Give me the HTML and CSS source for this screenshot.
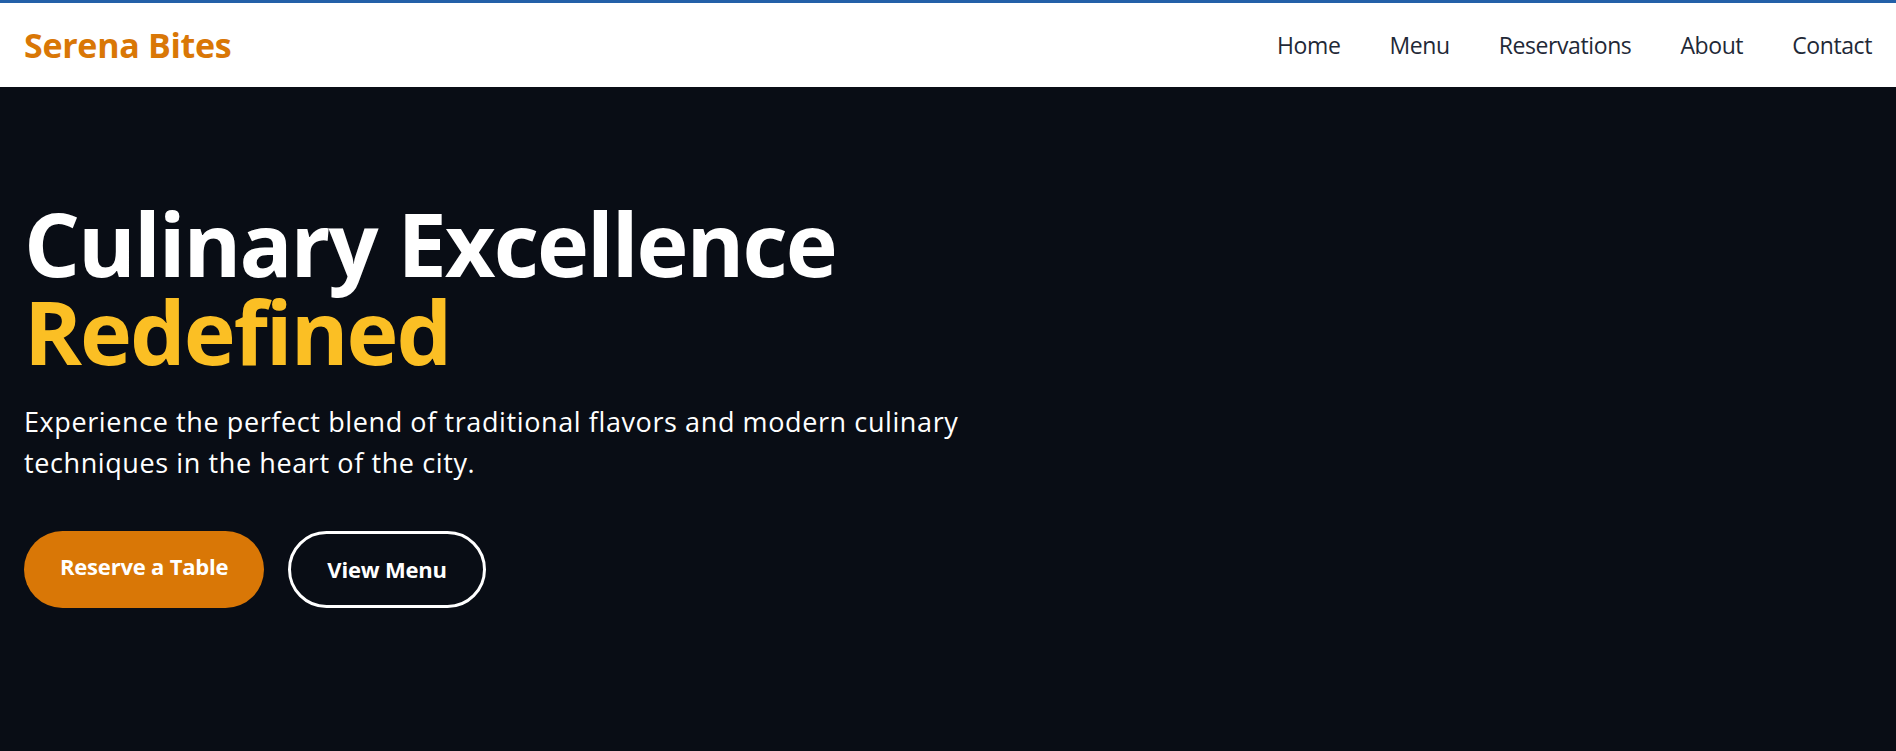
FILE: index.html
```html
<!DOCTYPE html>
<html lang="en">
<head>
<meta charset="utf-8">
<title>Serena Bites</title>
<link rel="stylesheet" href="styles.css">
</head>
<body>
<header class="site-header">
  <a class="logo" href="#">Serena Bites</a>
  <nav class="nav">
    <a href="#">Home</a>
    <a href="#">Menu</a>
    <a href="#">Reservations</a>
    <a href="#">About</a>
    <a href="#">Contact</a>
  </nav>
</header>
<main class="hero">
  <h1 class="hero-title">Culinary Excellence<br><span class="accent">Redefined</span></h1>
  <p class="hero-text">Experience the perfect blend of traditional flavors and modern culinary techniques in the heart of the city.</p>
  <div class="actions">
    <a class="btn btn-primary" href="#">Reserve a Table</a>
    <a class="btn btn-outline" href="#">View Menu</a>
  </div>
</main>
</body>
</html>
```

FILE: styles.css
```css
* { box-sizing: border-box; }
html, body { margin: 0; padding: 0; }
body {
  font-family: "Open Sans", "Noto Sans", sans-serif;
  background: #090d15;
  min-height: 751px;
}
a { text-decoration: none; }

.site-header {
  background: #ffffff;
  border-top: 3px solid #2360a8;
  height: 87px;
  padding: 0 24px;
  display: flex;
  align-items: center;
  justify-content: space-between;
}
.logo {
  color: #d97706;
  font-weight: 700;
  font-size: 34px;
  letter-spacing: -0.3px;
}
.nav {
  display: flex;
  gap: 49px;
}
.nav a {
  color: #1f2937;
  font-size: 23px;
  letter-spacing: -0.4px;
}

.hero {
  padding: 112px 24px 0;
  color: #ffffff;
}
.hero-title {
  margin: 0;
  font-size: 88px;
  line-height: 88px;
  font-weight: 700;
  letter-spacing: -2px;
}
.accent { color: #fbbf24; }
.hero-text {
  margin: 26px 0 0;
  font-size: 27px;
  line-height: 41px;
  max-width: 965px;
  letter-spacing: 0.6px;
}
.actions {
  margin-top: 48px;
  display: flex;
  gap: 24px;
}
.btn {
  color: #ffffff;
  font-size: 22px;
  line-height: 33px;
  font-weight: 700;
  border-radius: 999px;
  padding: 19px 36px;
  letter-spacing: -0.2px;
}
.btn-primary { background: #d97706; }
.btn-outline { border: 3px solid #ffffff; }
```
